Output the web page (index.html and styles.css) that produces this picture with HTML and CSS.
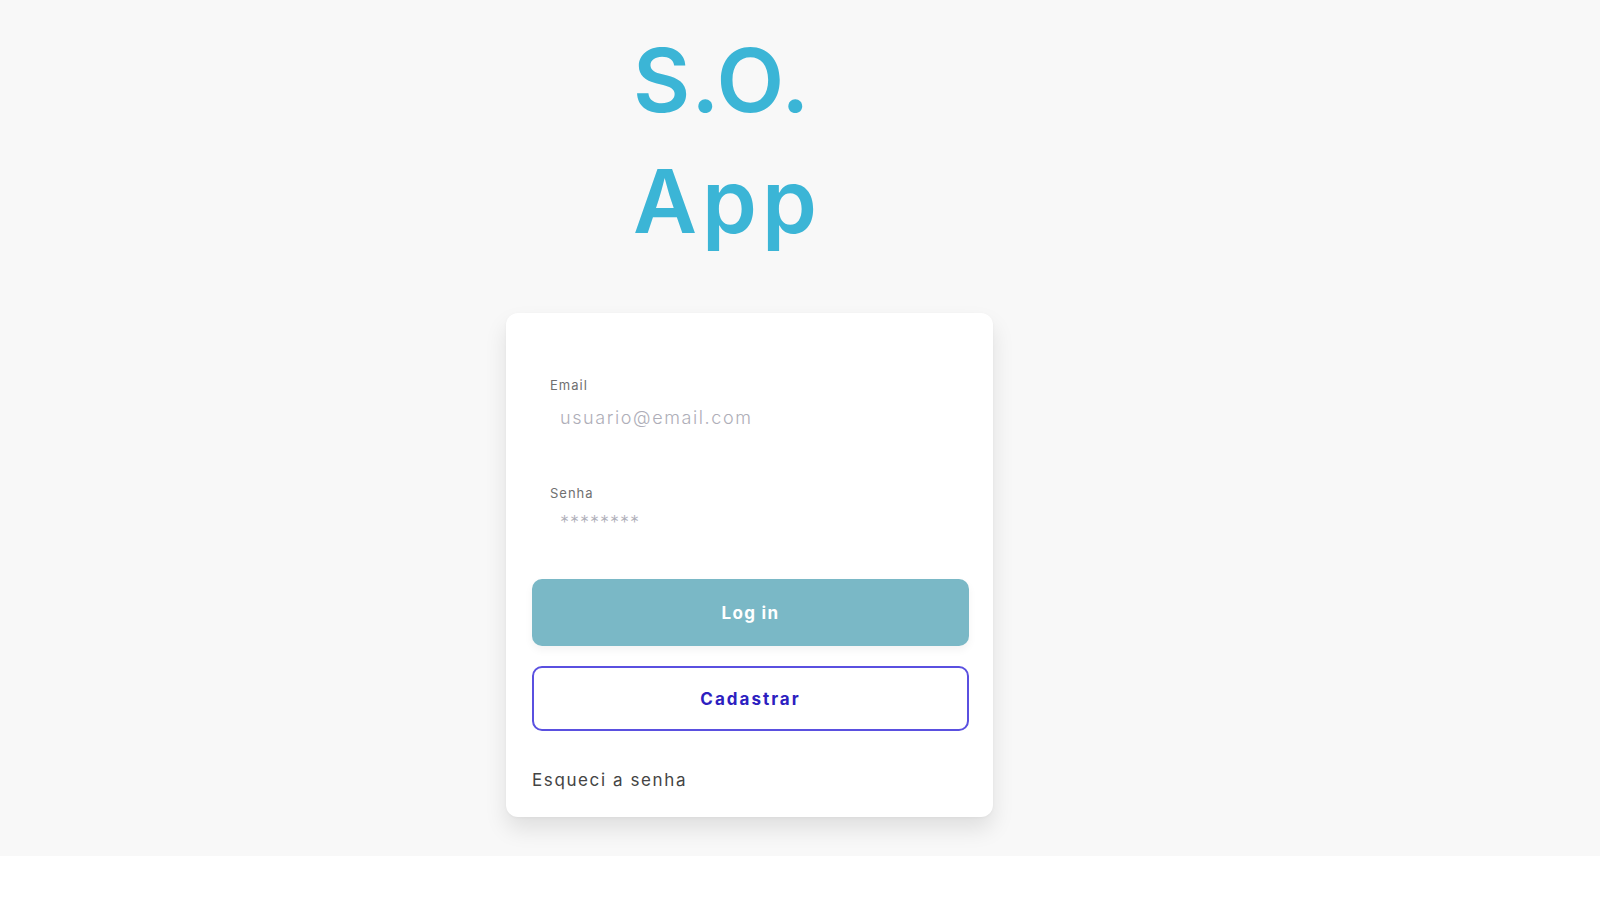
FILE: index.html
```html
<!DOCTYPE html>
<html lang="pt-BR">
<head>
<meta charset="utf-8">
<title>S.O. App</title>
<link rel="stylesheet" href="styles.css">
</head>
<body>
<main class="page">
  <div class="column">
    <h1 class="brand"><span class="brand-line">S.O.</span><span class="brand-line brand-app">App</span></h1>
    <form class="card">
      <div class="fields">
        <label class="field">
          <span class="field-label">Email</span>
          <input class="field-input" type="email" placeholder="usuario@email.com">
        </label>
        <label class="field field-pass">
          <span class="field-label">Senha</span>
          <input class="field-input field-input-pass" type="text" placeholder="********">
        </label>
      </div>
      <button type="button" class="btn btn-primary">Log in</button>
      <button type="button" class="btn btn-outline">Cadastrar</button>
      <a class="forgot" href="#">Esqueci a senha</a>
    </form>
  </div>
</main>
</body>
</html>
```
FILE: styles.css
```css
* { box-sizing: border-box; }
html, body { margin: 0; padding: 0; background: #ffffff; }
body { font-family: Inter, "Noto Sans", sans-serif; }

.page {
  background: #f8f8f8;
  height: 856px;
  overflow: hidden;
}

.column {
  width: 487px;
  margin-left: 506px;
  padding-top: 20px;
}

.brand {
  margin: 0 0 51px 0;
  padding-left: 127px;
  font-size: 88px;
  line-height: 121px;
  font-weight: 600;
  color: #3bb5d6;
  letter-spacing: 1px;
  display: flex;
  flex-direction: column;
}

.brand-app { letter-spacing: 5px; }

.card {
  background: #ffffff;
  border-radius: 12px;
  box-shadow: 0 12px 22px rgba(0, 0, 0, 0.10), 0 1px 3px rgba(0, 0, 0, 0.04);
  padding: 24px 24px 25px 26px;
  display: flex;
  flex-direction: column;
}

.fields {
  padding: 40px 18px 0 18px;
  display: flex;
  flex-direction: column;
}

.field {
  display: flex;
  flex-direction: column;
}

.field-label {
  font-size: 13px;
  line-height: 16px;
  color: #707070;
  letter-spacing: 1px;
}

.field-input {
  margin-top: 13px;
  border: none;
  outline: none;
  background: transparent;
  padding: 0 0 0 10px;
  font-family: inherit;
  font-size: 18px;
  font-weight: 300;
  line-height: 24px;
  height: 24px;
  color: #333;
  letter-spacing: 1.6px;
}
.field-input::placeholder { color: #aeaeb8; }

.field-pass { margin-top: 55px; }
.field-pass .field-input { margin-top: 10px; }
.field-input-pass { letter-spacing: 1px; }

.btn {
  width: 100%;
  font-family: inherit;
  font-weight: 700;
  font-size: 17px;
  border-radius: 10px;
  cursor: pointer;
}

.btn-primary {
  margin-top: 44px;
  height: 67px;
  border: none;
  background: #7ab8c6;
  color: #ffffff;
  letter-spacing: 1.3px;
  box-shadow: 0 4px 8px rgba(0, 0, 0, 0.05);
}

.btn-outline {
  margin-top: 20px;
  height: 65px;
  border: 2px solid #5a50e0;
  background: #ffffff;
  color: #2c20c0;
  letter-spacing: 2px;
}

.forgot {
  margin-top: 37px;
  font-size: 17px;
  line-height: 24px;
  color: #444444;
  letter-spacing: 1.6px;
  text-decoration: none;
}
```
